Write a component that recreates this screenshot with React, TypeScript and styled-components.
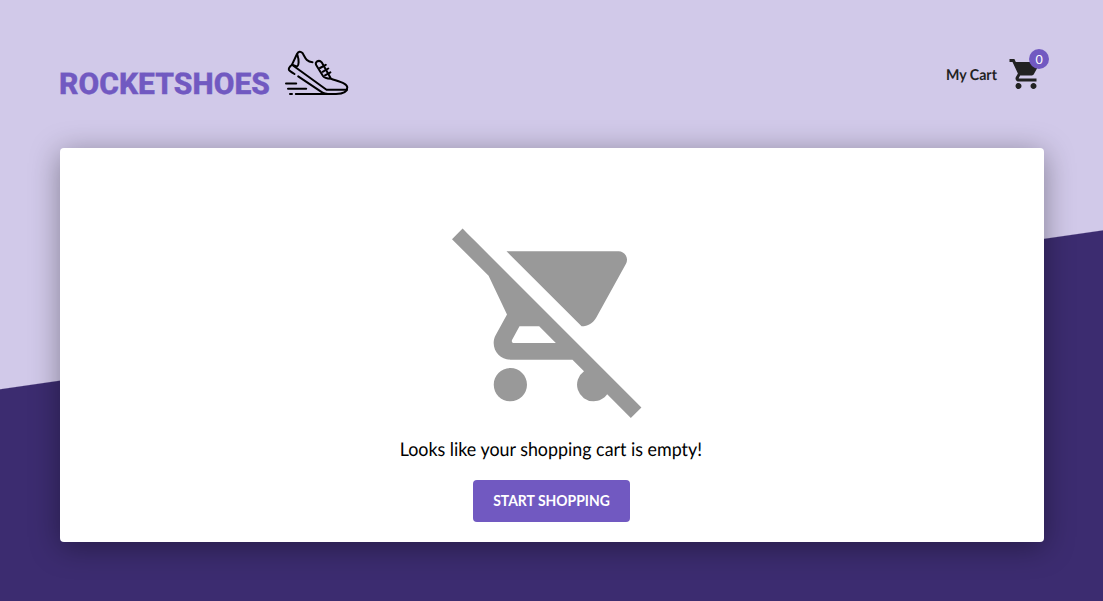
import React from 'react';
import styled, { createGlobalStyle } from 'styled-components';
import { MdShoppingCart, MdRemoveShoppingCart } from 'react-icons/md';

const GlobalStyle = createGlobalStyle`
  * { margin: 0; padding: 0; box-sizing: border-box; }
  body {
    background: linear-gradient(171.8deg, #d1c9e9 0 51.15%, #3c2c70 51.3%);
    height: 601px;
    overflow: hidden;
    font: 14px Lato, sans-serif;
    text-rendering: geometricPrecision;
    -webkit-font-smoothing: antialiased;
  }
`;
const Page = styled.div`
  height: 601px;
  padding: 50px 59.5px 59px;
`;
const Header = styled.header`
  height: 98px;
  display: flex;
  justify-content: space-between;
  align-items: flex-start;
`;
const Logo = styled.a`
  display: flex;
  align-items: flex-start;
`;
const Brand = styled.h1`
  width: 211px;
  font: 800 30px/36px Roboto, sans-serif;
  letter-spacing: 0.05px;
  -webkit-text-stroke: 0.4px #7159c1;
  color: #7159c1;
  margin: 17px 15px 0 -0.5px;
`;
const Shoe = styled.svg`
  width: 64px;
  height: 46px;
  fill: none;
  stroke: #000;
  stroke-width: 2;
  stroke-linecap: round;
  stroke-linejoin: round;
`;
const Cart = styled.a`
  display: flex;
  align-items: center;
  gap: 10.5px;
  position: relative;
  margin: 6px 0 0;
  color: #222;
`;
const CartLabel = styled.span`
  font-size: 15px;
  font-weight: 700;
  padding-top: 2px;
  transform: scaleX(0.943);
  transform-origin: right;
`;
const Badge = styled.span`
  position: absolute;
  top: -7px;
  right: -5.5px;
  width: 20px;
  height: 20px;
  border-radius: 50%;
  background: #7159c1;
  color: #fff;
  font: 12.5px/21px Lato, sans-serif;
  text-align: center;
`;
const Card = styled.main`
  height: 394px;
  background: #fff;
  border-radius: 4px;
  box-shadow: 0 5px 30px rgba(0, 0, 0, 0.37);
  display: flex;
  flex-direction: column;
  align-items: center;
  padding-top: 70px;
`;
const Message = styled.p`
  font-size: 19px;
  line-height: 22px;
  margin: 21px 1px 19px 0;
  color: #000;
  transform: scaleX(0.94);
`;
const Button = styled.button`
  width: 157px;
  height: 42px;
  padding-bottom: 3px;
  border: 0;
  border-radius: 4px;
  background: #7159c1;
  color: #fff;
  font: 700 15px Lato, sans-serif;
  text-transform: uppercase;
`;
const ButtonLabel = styled.span`
  display: block;
  margin: 0 -10px;
  white-space: nowrap;
  transform: scaleX(0.93);
`;

export default function App() {
  return (
    <Page>
      <GlobalStyle />
      <Header>
        <Logo>
          <Brand>ROCKETSHOES</Brand>
          <Shoe viewBox="0 0 64 46">
            <path d="M7 14.7 L12 4 Q14.3 0 17.5 3 C20 7 21 12 27.5 12.2" />
            <path d="M12.3 4.5 Q13.8 9 13.6 12.5 Q13.2 16.4 11.8 16.4 L7 14.7 Q3 18 4 20 Q4.6 21 9.5 24" />
            <path d="M8 15.5 L41.5 39.8 H62" />
            <path d="M13.2 26.4 L37.5 42.7 Q39.5 44 43 44" />
            <path d="M10.8 44 H51 C58 43.8 62.3 42 62.3 37.5 C62.3 33.5 56 32.2 46 28.8 L36.7 12.3 Q34.5 9.8 31.7 11.7 Q30.1 13 31.3 15.2 L38 26 Q39.5 28.5 46 28.8" />
            <path d="M35 18 L40.8 14.8 M37.6 21.8 L43.3 18.5 M40 25.3 L45.4 22.4 M1 33.6 H11.2 M3 38.7 H21.2 M5 44 H7" />
          </Shoe>
        </Logo>
        <Cart>
          <CartLabel>My Cart</CartLabel>
          <MdShoppingCart size={36} />
          <Badge>0</Badge>
        </Cart>
      </Header>
      <Card>
        <MdRemoveShoppingCart size={200} color="#999" />
        <Message>Looks like your shopping cart is empty!</Message>
        <Button>
          <ButtonLabel>Start shopping</ButtonLabel>
        </Button>
      </Card>
    </Page>
  );
}
